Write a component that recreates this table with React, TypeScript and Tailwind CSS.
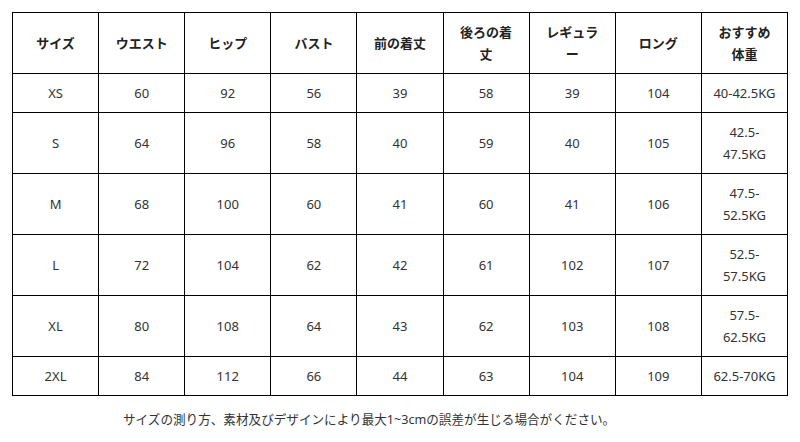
import React from "react";

const headers: string[][] = [
  ["サイズ"],
  ["ウエスト"],
  ["ヒップ"],
  ["バスト"],
  ["前の着丈"],
  ["後ろの着", "丈"],
  ["レギュラ", "ー"],
  ["ロング"],
  ["おすすめ", "体重"],
];

const rows: (string | string[])[][] = [
  ["XS", "60", "92", "56", "39", "58", "39", "104", "40-42.5KG"],
  ["S", "64", "96", "58", "40", "59", "40", "105", ["42.5-", "47.5KG"]],
  ["M", "68", "100", "60", "41", "60", "41", "106", ["47.5-", "52.5KG"]],
  ["L", "72", "104", "62", "42", "61", "102", "107", ["52.5-", "57.5KG"]],
  ["XL", "80", "108", "64", "43", "62", "103", "108", ["57.5-", "62.5KG"]],
  ["2XL", "84", "112", "66", "44", "63", "104", "109", "62.5-70KG"],
];

function Lines({ value }: { value: string | string[] }) {
  const parts = Array.isArray(value) ? value : [value];
  return (
    <>
      {parts.map((p, i) => (
        <span key={i} className="block whitespace-nowrap">
          {p}
        </span>
      ))}
    </>
  );
}

export default function App() {
  return (
    <div
      className="w-[800px] h-[442px] bg-white pt-[12px] pl-[12px]"
      style={{ fontFamily: '"Noto Sans", "Noto Sans CJK JP", sans-serif' }}
    >
      <table className="w-[776px] table-fixed border-collapse text-[13px] leading-[22px]">
        <thead>
          <tr>
            {headers.map((h, i) => (
              <th
                key={i}
                className="border border-black px-2 py-[8px] h-[61px] text-center font-bold text-[#222]"
              >
                <Lines value={h} />
              </th>
            ))}
          </tr>
        </thead>
        <tbody>
          {rows.map((r, ri) => (
            <tr key={ri}>
              {r.map((c, ci) => (
                <td
                  key={ci}
                  className="border border-black px-2 py-[8px] text-center text-[#333]"
                >
                  <Lines value={c} />
                </td>
              ))}
            </tr>
          ))}
        </tbody>
      </table>
      <p className="mt-[13px] pl-[111px] text-[12.6px] leading-[22px] text-[#333]">
        サイズの測り方、素材及びデザインにより最大1~3cmの誤差が生じる場合がください。
      </p>
    </div>
  );
}
